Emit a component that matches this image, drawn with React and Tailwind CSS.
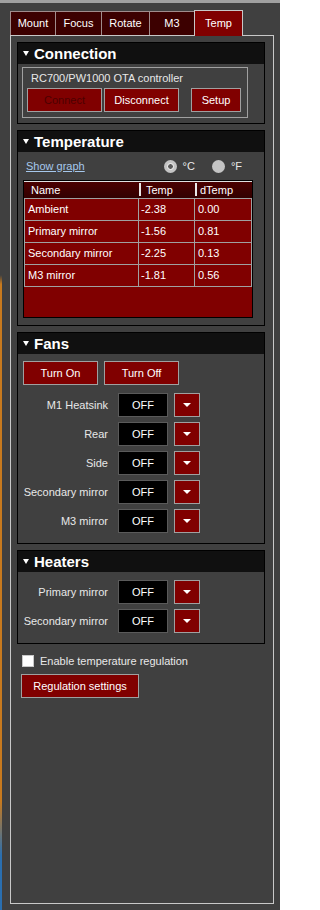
import { useState } from 'react'

const tabs = [
  { label: 'Mount', w: 'w-[45px]' },
  { label: 'Focus', w: 'w-[46px]' },
  { label: 'Rotate', w: 'w-[48px]' },
  { label: 'M3', w: 'w-[45px]' },
]

const temps = [
  { name: 'Ambient', t: '-2.38', d: '0.00' },
  { name: 'Primary mirror', t: '-1.56', d: '0.81' },
  { name: 'Secondary mirror', t: '-2.25', d: '0.13' },
  { name: 'M3 mirror', t: '-1.81', d: '0.56' },
]

function Group({ title, children, className = '' }) {
  return (
    <div className={`w-[248px] border border-black ${className}`}>
      <div className="h-[21px] bg-[#101010] flex items-center pl-[5px] gap-[5px]">
        <span className="w-0 h-0 border-l-[3px] border-r-[3px] border-t-[5px] border-l-transparent border-r-transparent border-t-white" />
        <span className="text-[15px] font-bold text-white leading-none">{title}</span>
      </div>
      {children}
    </div>
  )
}

function RedButton({ children, className = '', disabled }) {
  return (
    <button
      className={`block h-[24px] bg-[#800000] border border-[#a0a0a0] text-[11px] leading-none ${
        disabled ? 'text-[#4c0000]' : 'text-white'
      } ${className}`}
    >
      {children}
    </button>
  )
}

function OffRow({ label }) {
  return (
    <div className="flex items-center h-[24px]">
      <div className="w-[90px] text-right text-[11px] text-[#e8e8e8]">{label}</div>
      <div className="ml-[10px] w-[50px] h-[24px] bg-black border border-[#5a5a5a] flex items-center justify-center text-[11px] text-white">
        OFF
      </div>
      <button className="ml-[6px] w-[26px] h-[24px] bg-[#800000] border border-[#a0a0a0] flex items-center justify-center">
        <span className="w-0 h-0 border-l-[4px] border-r-[4px] border-t-[4px] border-l-transparent border-r-transparent border-t-white" />
      </button>
    </div>
  )
}

function Radio({ checked, label }) {
  return (
    <div className="flex items-center gap-[6px]">
      <span className="w-[13px] h-[13px] rounded-full bg-[#c4c4c4] flex items-center justify-center">
        {checked && <span className="w-[7px] h-[7px] rounded-full bg-[#5a5a5a] border border-white" />}
      </span>
      <span className="text-[11px] text-[#e8e8e8]">{label}</span>
    </div>
  )
}

export default function App() {
  const [regulate, setRegulate] = useState(false)

  return (
    <div className="w-[280px] h-[910px] bg-[#404040] flex flex-col font-['Liberation_Sans',Arial,sans-serif] overflow-hidden">
      <div className="h-[3px] bg-[#a0a0a0]" />
      <div className="flex-1 flex">
        <div className="w-[2px] bg-[linear-gradient(to_bottom,#404040_0%,#404040_30%,#c87a1e_31%,#c87a1e_88%,#2a6fb0_94%,#2a6fb0_100%)]" />

        <div className="pl-[8px] pt-[7px] flex flex-col">
          {/* Tabs */}
          <div className="flex items-end h-[25px]">
            {tabs.map(t => (
              <div
                key={t.label}
                className={`${t.w} h-[24px] bg-[#3c0000] border-l border-t border-[#a08c8c] flex items-center justify-center text-[11px] text-white`}
              >
                {t.label}
              </div>
            ))}
            <div className="relative z-10 -mb-px w-[49px] h-[26px] bg-[#800000] border-l border-t border-r border-[#c8c8c8] flex items-center justify-center text-[11px] text-white">
              Temp
            </div>
          </div>

          {/* Tab page */}
          <div className="w-[264px] h-[869px] border border-[#c8c8c8] pl-[6px] pt-[6px] flex flex-col">
            <Group title="Connection">
              <div className="pt-[3px] pl-[4px] pb-[5px]">
                <div className="w-[226px] border border-[#a0a0a0] px-[4px] pb-[5px]">
                  <div className="h-[20px] flex items-center pl-[4px] text-[11px] text-[#e8e8e8]">
                    RC700/PW1000 OTA controller
                  </div>
                  <div className="flex">
                    <RedButton className="w-[75px]" disabled>Connect</RedButton>
                    <RedButton className="w-[75px] ml-[2px]">Disconnect</RedButton>
                    <RedButton className="w-[50px] ml-[12px]">Setup</RedButton>
                  </div>
                </div>
              </div>
            </Group>

            <Group title="Temperature" className="mt-[6px]">
              <div className="pl-[5px] pb-[7px]">
                <div className="h-[28px] flex items-center">
                  <a className="ml-[3px] text-[11px] text-[#a6c8ec] underline">Show graph</a>
                  <div className="ml-auto mr-[22px] flex items-center gap-[17px]">
                    <Radio checked label="°C" />
                    <Radio label="°F" />
                  </div>
                </div>
                <div className="w-[230px] h-[138px] border border-black bg-[#800000] flex flex-col">
                  <div className="h-[17px] flex border-t border-[#e0e0e0] bg-[linear-gradient(to_bottom,#4a0000,#320000)] text-[11px] text-white">
                    <div className="w-[115px] pl-[7px] flex items-center">Name</div>
                    <div className="w-[56px] flex items-center relative pl-[7px]">
                      <span className="absolute left-0 top-[1px] w-[2px] h-[13px] bg-[#e8e8e8]" />
                      Temp
                    </div>
                    <div className="flex-1 flex items-center relative pl-[5px]">
                      <span className="absolute left-0 top-[1px] w-[2px] h-[13px] bg-[#e8e8e8]" />
                      dTemp
                    </div>
                  </div>
                  <div className="border-t border-l border-[#a0a0a0]">
                    {temps.map(r => (
                      <div key={r.name} className="flex h-[22px] text-[11px] text-white">
                        <div className="w-[114px] border-r border-b border-[#a0a0a0] pl-[3px] flex items-center">{r.name}</div>
                        <div className="w-[56px] border-r border-b border-[#a0a0a0] pl-[2px] flex items-center">{r.t}</div>
                        <div className="w-[57px] border-r border-b border-[#a0a0a0] pl-[3px] flex items-center">{r.d}</div>
                      </div>
                    ))}
                  </div>
                </div>
              </div>
            </Group>

            <Group title="Fans" className="mt-[6px]">
              <div className="pl-[5px] pt-[7px] pb-[8px] flex gap-[6px]">
                <RedButton className="w-[75px]">Turn On</RedButton>
                <RedButton className="w-[75px]">Turn Off</RedButton>
              </div>
              <div className="flex flex-col gap-[5px] pb-[10px]">
                <OffRow label="M1 Heatsink" />
                <OffRow label="Rear" />
                <OffRow label="Side" />
                <OffRow label="Secondary mirror" />
                <OffRow label="M3 mirror" />
              </div>
            </Group>

            <Group title="Heaters" className="mt-[6px]">
              <div className="flex flex-col gap-[5px] pt-[8px] pb-[10px]">
                <OffRow label="Primary mirror" />
                <OffRow label="Secondary mirror" />
              </div>
            </Group>

            <label className="mt-[10px] ml-[5px] h-[14px] flex items-center gap-[6px] text-[11px] text-[#e8e8e8]">
              <span
                onClick={() => setRegulate(v => !v)}
                className="w-[12px] h-[12px] bg-white border border-[#c8c8c8] flex items-center justify-center text-[9px] text-black leading-none"
              >
                {regulate ? '✓' : ''}
              </span>
              Enable temperature regulation
            </label>

            <RedButton className="w-[118px] mt-[6px] ml-[4px]">Regulation settings</RedButton>
          </div>
        </div>
      </div>
    </div>
  )
}
